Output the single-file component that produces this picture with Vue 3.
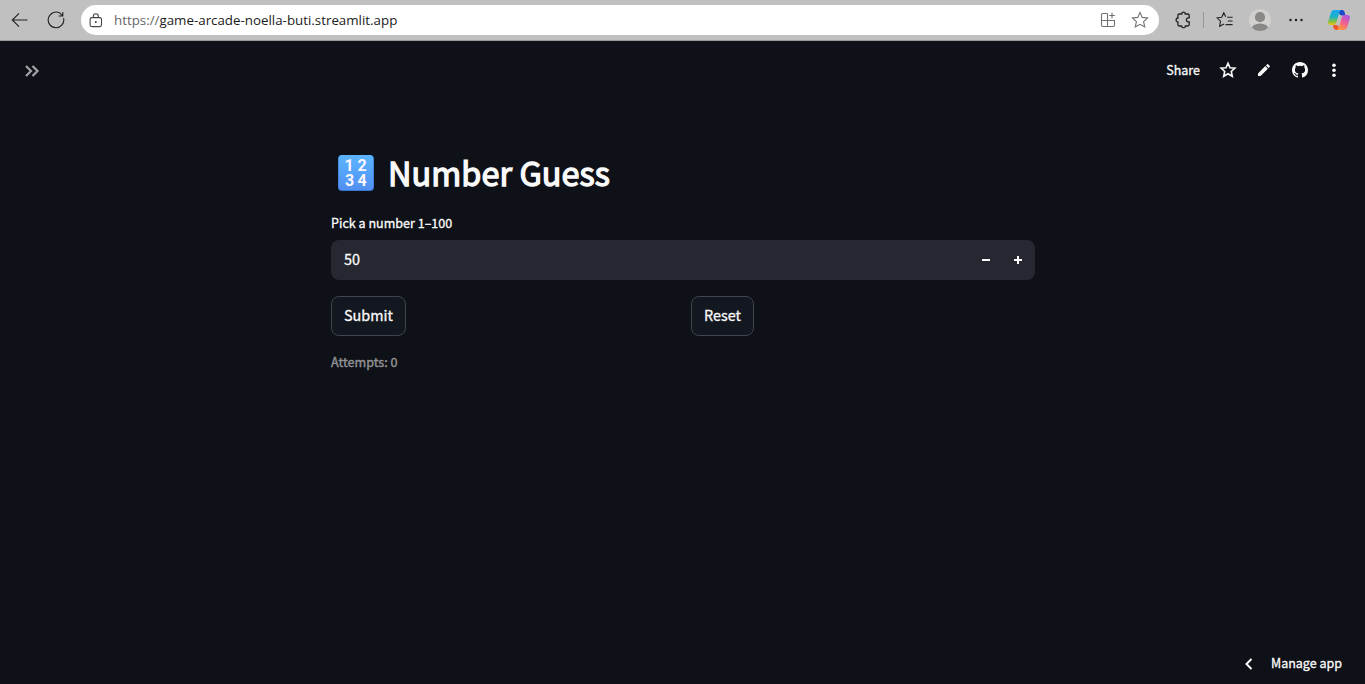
<script setup>
import { ref } from 'vue'

const value = ref(50)
const attempts = ref(0)
</script>

<template>
  <div class="window">
    <header class="browser">
      <svg class="back" width="18" height="16" viewBox="0 0 18 16"><path d="M16.5 8H1.5M8 1.3L1.3 8L8 14.7" /></svg>
      <svg class="reload" width="18" height="18" viewBox="0 0 18 18"><path d="M16.6 7.2A7.8 7.8 0 1 1 12.8 2.1L15.7 4.6M15.8 1V5H11.6" /></svg>
      <div class="address">
        <svg class="lock" width="14" height="15" viewBox="0 0 14 15"><rect x="1.1" y="4.6" width="11.4" height="9" rx="1.8" /><path d="M4.3 4.5V3.3a2.5 2.5 0 0 1 5 0V4.5" /><circle cx="6.8" cy="9.1" r=".5" /></svg>
        <div class="url"><span>https://</span>game-arcade-noella-buti.streamlit.app</div>
        <svg class="apps" width="16" height="16" viewBox="0 0 16 16"><path d="M7.5 1.5H2.7A1.2 1.2 0 0 0 1.5 2.7V13.3A1.2 1.2 0 0 0 2.7 14.5H13.3A1.2 1.2 0 0 0 14.5 13.3V8.5H1.5M7.5 1.5V14.5M12 .7V6.3M9.2 3.5H14.8" /></svg>
        <svg class="fav" width="18" height="18" viewBox="0 0 18 18"><path d="M9 1.4L11.2 6.4L16.6 7L12.6 10.7L13.7 16L9 13.3L4.3 16L5.4 10.7L1.4 7L6.8 6.4Z" /></svg>
      </div>
      <svg class="puzzle" width="17" height="18" viewBox="0 0 17 18"><path d="M4.2 3H6.7C6.4 .6 10.6 .6 10.3 3H12.8Q14.2 3 14.2 4.4V6.8H13.2C10.8 6.8 10.8 10.8 13.2 10.8H14.2V13.6Q14.2 15 12.8 15H10.4C10.5 17.2 6.5 17.2 6.6 15H4.2Q2.9 15 2.9 13.6V11C.5 11.1 .5 7 2.9 7V4.4Q2.9 3 4.2 3Z" /></svg>
      <i class="divider"></i>
      <svg class="favorites" width="18" height="18" viewBox="0 0 18 18"><path d="M11.2 6.3H16.6M11.8 10H16.6M9.5 13.6H16.6M9.7 5.8L7.8 1.8L5.7 6.2L1.1 6.8L4.5 10.2L3.7 15.2L8.1 12.9" /></svg>
      <svg class="avatar" width="24" height="24" viewBox="0 0 24 24"><defs><clipPath id="face"><circle cx="12" cy="12" r="11" /></clipPath></defs><circle cx="12" cy="12" r="11" fill="#d2d0ce" /><g clip-path="url(#face)" fill="#8a8886"><circle cx="12" cy="9.2" r="5.1" /><ellipse cx="12" cy="20.6" rx="8.5" ry="5.2" /></g></svg>
      <svg class="dots" width="16" height="6" viewBox="0 0 16 6"><circle cx="2.5" cy="3" r="1.25" /><circle cx="8" cy="3" r="1.25" /><circle cx="13.5" cy="3" r="1.25" /></svg>
      <svg class="copilot" width="24" height="22" viewBox="0 0 24 22">
        <defs>
          <linearGradient id="cpA" x1="0" y1="0" x2="0" y2="1"><stop offset="0" stop-color="#18a5ee" /><stop offset=".45" stop-color="#1ab2c8" /><stop offset=".75" stop-color="#7cbf45" /><stop offset="1" stop-color="#f1c40c" /></linearGradient>
          <linearGradient id="cpB" x1=".8" y1="0" x2=".3" y2="1"><stop offset="0" stop-color="#a556e8" /><stop offset=".5" stop-color="#ef5f92" /><stop offset="1" stop-color="#ff9a3c" /></linearGradient>
        </defs>
        <path d="M11 1H15.2Q17 1 17.6 3L18.4 6.4H14.5Q12.5 6.4 12 4Z" fill="#1b48cf" />
        <path d="M7.5 1H14Q12.8 1.7 12.2 4L9.3 13.7Q8.5 16 6.3 16H3.7Q.5 16 1.2 12.7L3.8 4Q4.8 1 7.5 1Z" fill="url(#cpA)" />
        <path d="M6 16H9.2Q11.2 16 11.7 18L12.2 21H9.2Q7.2 21 6.6 19Z" fill="#ee552b" />
        <path d="M17.2 6H20Q23.7 6 22.8 9.5L20.2 18Q19.2 21 16.5 21H10Q11.3 20.2 12 18L14.7 8.5Q15.3 6 17.2 6Z" fill="url(#cpB)" />
      </svg>
    </header>

    <div class="app">
      <div class="toolbar">
        <svg class="expand" width="16" height="14" viewBox="0 0 16 14"><path d="M2 2L7 7L2 12M8.5 2L13.5 7L8.5 12" /></svg>
        <nav class="actions">
          <span class="share">Share</span>
          <svg class="star" width="18" height="18" viewBox="0 0 18 18"><path d="M9 2.2L11 6.7L15.9 7.2L12.3 10.5L13.3 15.3L9 12.8L4.7 15.3L5.7 10.5L2.1 7.2L7 6.7Z" /></svg>
          <svg class="solid pencil" width="16" height="16" viewBox="0 0 16 16"><path d="M2 11.4V14H4.6L11.9 6.7L9.3 4.1ZM13.8 4.8Q14.2 4.4 13.8 3.9L12.1 2.2Q11.6 1.8 11.2 2.2L10 3.4L12.6 6Z" /></svg>
          <svg class="solid github" width="16" height="16" viewBox="0 0 16 16"><path d="M8 0C3.58 0 0 3.58 0 8c0 3.54 2.29 6.53 5.47 7.59.4.07.55-.17.55-.38 0-.19-.01-.82-.01-1.49-2.01.37-2.53-.49-2.69-.94-.09-.23-.48-.94-.82-1.13-.28-.15-.68-.52-.01-.53.63-.01 1.08.58 1.23.82.72 1.21 1.87.87 2.33.66.07-.52.28-.87.51-1.07-1.78-.2-3.64-.89-3.64-3.95 0-.87.31-1.59.82-2.15-.08-.2-.36-1.02.08-2.12 0 0 .67-.21 2.2.82a7.6 7.6 0 0 1 4 0c1.53-1.04 2.2-.82 2.2-.82.44 1.1.16 1.92.08 2.12.51.56.82 1.27.82 2.15 0 3.07-1.87 3.75-3.65 3.95.29.25.54.73.54 1.48 0 1.07-.01 1.93-.01 2.2 0 .21.15.46.55.38A8 8 0 0 0 16 8c0-4.42-3.58-8-8-8Z" /></svg>
          <svg class="solid more" width="6" height="16" viewBox="0 0 6 16"><circle cx="3" cy="3.2" r="1.8" /><circle cx="3" cy="8.2" r="1.8" /><circle cx="3" cy="13.2" r="1.8" /></svg>
        </nav>
      </div>

      <main>
        <h1>
          <svg class="numbers" width="38" height="38" viewBox="0 0 38 38">
            <defs><linearGradient id="tile" x1="0" y1="0" x2="0" y2="1"><stop offset="0" stop-color="#5cb5fe" /><stop offset=".5" stop-color="#55a3fa" /><stop offset="1" stop-color="#5290f0" /></linearGradient></defs>
            <rect x="1" y="1" width="36" height="36" rx="4" fill="#3b78d2" />
            <rect x="1.6" y="1" width="34.6" height="35" rx="3.8" fill="url(#tile)" />
            <text x="12" y="17.4">1</text><text x="25" y="17.4">2</text>
            <text x="12.5" y="31.7">3</text><text x="25" y="31.7">4</text>
          </svg>
          <span>Number Guess</span>
        </h1>
        <label>Pick a number 1–100</label>
        <div class="field">
          <span class="value">{{ value }}</span>
          <svg width="12" height="12" viewBox="0 0 12 12"><path d="M2 6H10" /></svg>
          <svg width="12" height="12" viewBox="0 0 12 12"><path d="M2 6H10M6 2V10" /></svg>
        </div>
        <div class="columns">
          <div><button class="submit">Submit</button></div>
          <div><button class="reset">Reset</button></div>
        </div>
        <p class="attempts">Attempts: {{ attempts }}</p>
      </main>

      <footer>
        <svg width="10" height="14" viewBox="0 0 10 14"><path d="M7.5 2L2.5 7L7.5 12" /></svg>
        <span>Manage app</span>
      </footer>
    </div>
  </div>
</template>

<style>
body { background: #0e1117; }
</style>

<style scoped>
.window {
  box-sizing: border-box;
  height: 684px;
  display: flex;
  flex-direction: column;
  overflow: hidden;
  color: #fafafa;
  font-family: "Noto Sans CJK SC", "Noto Sans", sans-serif;
}
svg { display: block; flex: none; }
.browser {
  box-sizing: border-box;
  height: 41px;
  flex: none;
  display: flex;
  align-items: center;
  padding: 0 14px 0 11px;
  background: #c0c0c0;
  border-bottom: 1px solid #999;
}
.browser svg { fill: none; stroke: #222; stroke-width: 1.1; }
.browser .avatar, .browser .copilot { stroke: none; }
.browser .reload { margin-left: 18px; }
.address {
  box-sizing: border-box;
  width: 1078px;
  height: 30px;
  margin-left: 16px;
  padding: 0 10px 0 8px;
  border-radius: 15px;
  background: #fff;
  display: flex;
  align-items: center;
}
.browser .lock { stroke: #444; }
.url {
  flex: 1;
  margin-left: 11px;
  color: #1b1b1b;
  font: 13.33px/20px "Open Sans", "Noto Sans", sans-serif;
}
.url span { color: #666; }
.browser .apps, .browser .fav { stroke: #707070; }
.browser .fav { margin-left: 15px; }
.browser .puzzle { margin-left: 16px; stroke-width: 1.3; }
.divider { width: 1px; height: 16px; margin-left: 11px; background: #999; }
.browser .favorites { margin-left: 12px; }
.browser .avatar { margin-left: 14px; }
.browser .dots { margin-left: 16px; fill: #222; stroke: none; }
.copilot { margin-left: 23px; }
.app { flex: 1; display: flex; flex-direction: column; background: #0e1117; }
.toolbar {
  height: 60px;
  flex: none;
  display: flex;
  align-items: center;
  justify-content: space-between;
  padding: 0 28px 0 24px;
}
.expand { fill: none; stroke: #a3a4a7; stroke-width: 2.2; }
.actions { display: flex; align-items: center; margin-top: -2px; }
.share, footer span { font-size: 12.5px; font-weight: 400; line-height: 20px; -webkit-text-stroke: .3px; }
.star { fill: none; stroke: #fafafa; stroke-width: 1.6; margin-left: 19px; }
.solid { fill: #fafafa; }
.pencil { margin-left: 19px; }
.github { margin-left: 20px; }
.more { margin-left: 23px; }
main { width: 704px; margin: 44px auto 0 331px; }
h1 {
  display: flex;
  align-items: center;
  height: 56px;
  margin: 0;
  padding-left: 6px;
  font-size: 32.4px;
  line-height: 54px;
  font-weight: 400;
}
h1 span { margin: -2px 0 0 13px; letter-spacing: .08px; -webkit-text-stroke: 1.3px; }
.numbers text {
  fill: #fdf6ff;
  font: 700 16px Roboto, sans-serif;
  text-anchor: middle;
}
label { display: block; margin-top: 12px; font-size: 12.55px; line-height: 20px; height: 27px; -webkit-text-stroke: .3px; }
.field {
  box-sizing: border-box;
  height: 40px;
  display: flex;
  align-items: center;
  gap: 20px;
  padding: 0 11px 0 13px;
  border-radius: 8px;
  background: #262730;
}
.value { flex: 1; font-size: 14.4px; line-height: 20px; padding-bottom: 2px; -webkit-text-stroke: .3px; }
.field svg { stroke: #fafafa; stroke-width: 2; }
.columns { display: grid; grid-template-columns: 1fr 1fr; gap: 16px; margin-top: 16px; }
button {
  box-sizing: border-box;
  display: block;
  height: 40px;
  padding: 0 0 2px;
  border: 1px solid #41444c;
  border-radius: 8px;
  background: #131720;
  color: #fafafa;
  font: 14.4px/36px "Noto Sans CJK SC", sans-serif;
  -webkit-text-stroke: .3px;
}
.submit { width: 75px; }
.reset { width: 63px; }
.attempts { margin: 16px 0 0; font-size: 12.6px; line-height: 20px; color: #919294; -webkit-text-stroke: .4px; }
footer {
  display: flex;
  align-items: center;
  justify-content: flex-end;
  gap: 17px;
  margin-top: auto;
  height: 41px;
  padding-right: 23px;
}
footer span { margin: -2px 0 0; }
footer svg { fill: none; stroke: #fafafa; stroke-width: 2; }
</style>
